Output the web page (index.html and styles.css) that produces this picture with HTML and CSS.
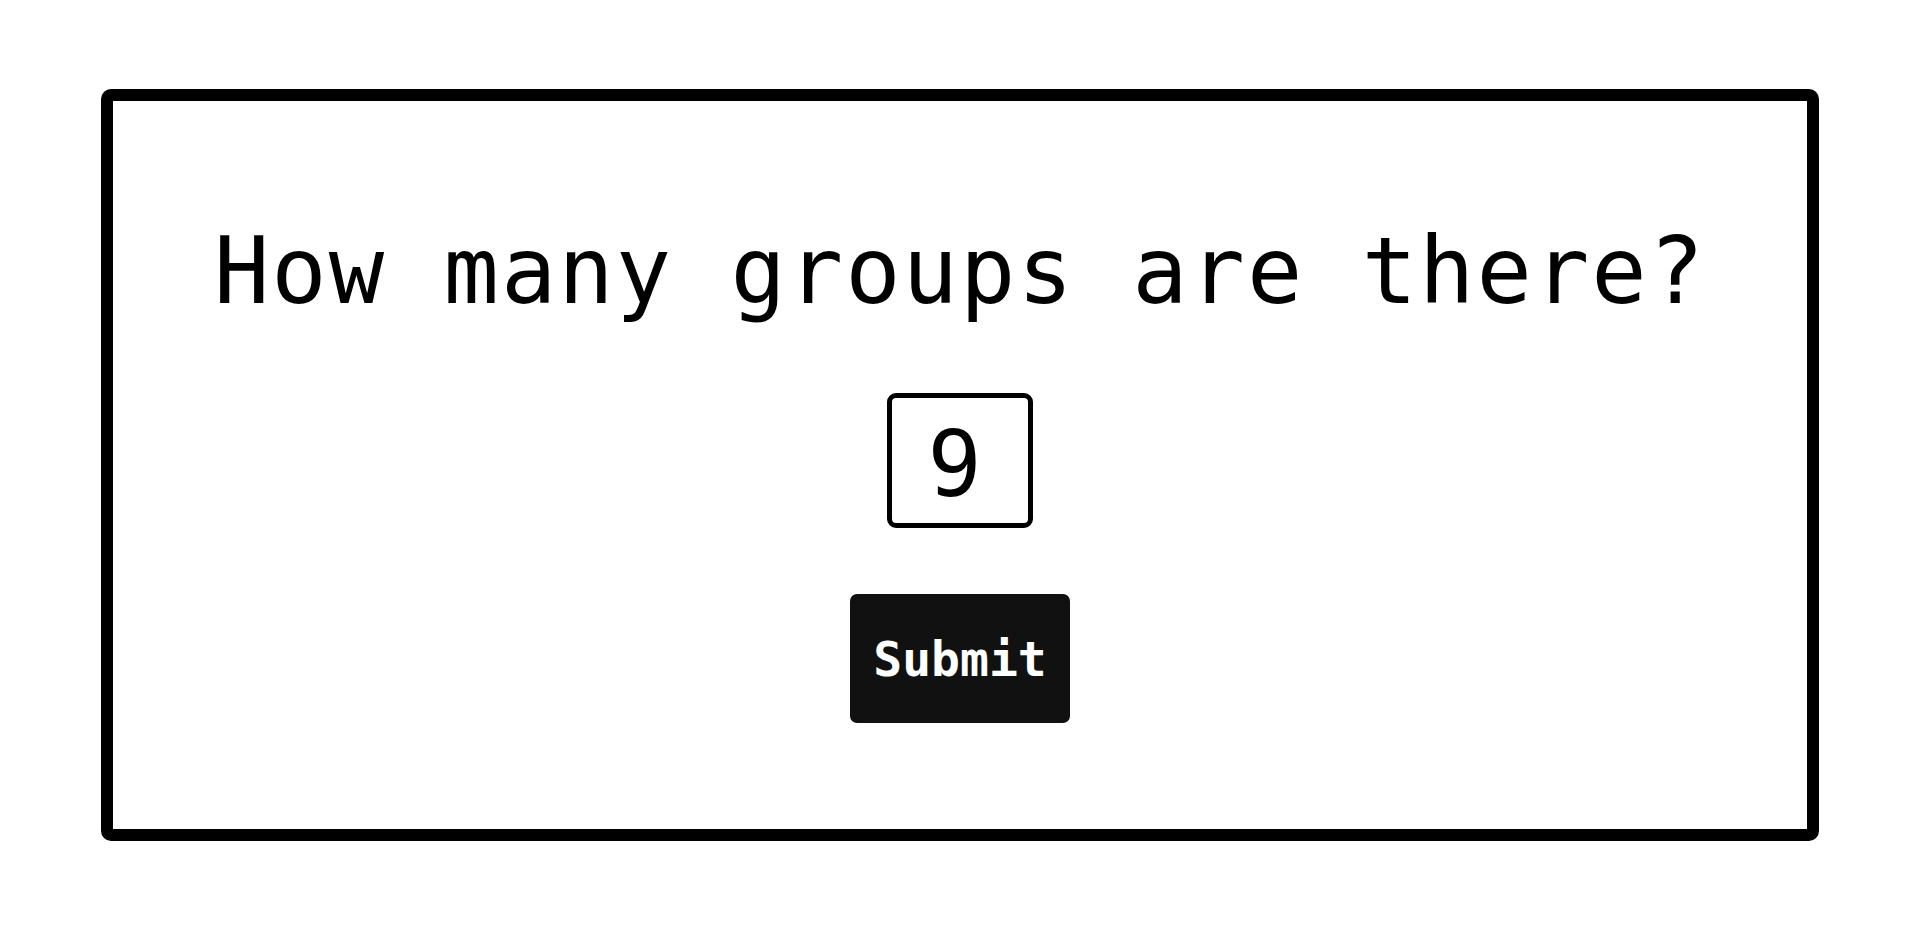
FILE: index.html
```html
<!DOCTYPE html>
<html lang="en">
<head>
<meta charset="utf-8">
<title>Groups</title>
<link rel="stylesheet" href="styles.css">
</head>
<body>
<main class="page">
  <section class="card">
    <h1 class="question">How many groups are there?</h1>
    <input class="answer" type="text" value="9">
    <button class="submit" type="button">Submit</button>
  </section>
</main>
</body>
</html>
```

FILE: styles.css
```css
html, body {
  margin: 0;
  padding: 0;
  background: #ffffff;
}

.page {
  padding: 89px 101px 88px;
  height: 929px;
  box-sizing: border-box;
}

.card {
  height: 752px;
  box-sizing: border-box;
  border: 12px solid #000000;
  border-radius: 10px;
  padding-top: 116px;
  display: flex;
  flex-direction: column;
  align-items: center;
  font-family: "DejaVu Sans Mono", monospace;
}

.question {
  margin: 0;
  font-size: 92px;
  font-weight: 400;
  line-height: 110px;
  letter-spacing: 2px;
  color: #000000;
}

.answer {
  margin-top: 66px;
  width: 146px;
  height: 135px;
  box-sizing: border-box;
  border: 5px solid #000000;
  border-radius: 9px;
  text-align: center;
  font-family: "DejaVu Sans Mono", monospace;
  font-size: 90px;
  color: #000000;
  padding: 7px 11px 0 0;
  outline: none;
  background: #ffffff;
}

.submit {
  margin-top: 66px;
  width: 220px;
  height: 129px;
  border: none;
  border-radius: 7px;
  background: #111111;
  color: #ffffff;
  font-family: "DejaVu Sans Mono", monospace;
  font-weight: 700;
  font-size: 48px;
  padding: 0;
}
```
